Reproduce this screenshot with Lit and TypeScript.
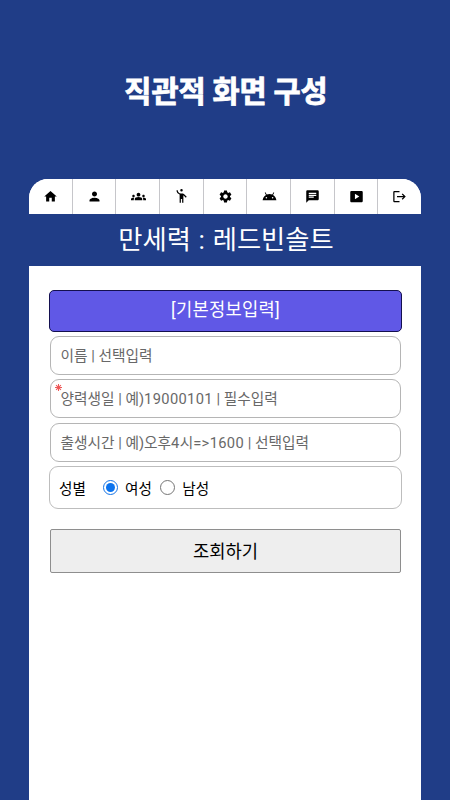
import { LitElement, html, css, svg } from "lit";
import { customElement } from "lit/decorators.js";

const icons: { name: string; d: string }[] = [
  { name: "홈", d: "M10 20v-6h4v6h5v-8h3L12 3 2 12h3v8z" },
  { name: "내 정보", d: "M12 12c2.21 0 4-1.79 4-4s-1.79-4-4-4-4 1.79-4 4 1.79 4 4 4zm0 2c-2.67 0-8 1.34-8 4v2h16v-2c0-2.66-5.33-4-8-4z" },
  { name: "그룹", d: "M12 12.75c1.63 0 3.07.39 4.24.9 1.08.48 1.76 1.56 1.76 2.73V18H6v-1.61c0-1.18.68-2.26 1.76-2.73 1.17-.52 2.61-.91 4.24-.91zM4 13c1.1 0 2-.9 2-2s-.9-2-2-2-2 .9-2 2 .9 2 2 2zm1.13 1.1c-.37-.06-.74-.1-1.13-.1-.99 0-1.93.21-2.78.58C.48 14.9 0 15.62 0 16.43V18h4.5v-1.61c0-.83.23-1.61.63-2.29zM20 13c1.1 0 2-.9 2-2s-.9-2-2-2-2 .9-2 2 .9 2 2 2zm4 3.43c0-.81-.48-1.53-1.22-1.85-.85-.37-1.79-.58-2.78-.58-.39 0-.76.04-1.13.1.4.68.63 1.46.63 2.29V18H24v-1.57zM12 6c1.66 0 3 1.34 3 3s-1.34 3-3 3-3-1.34-3-3 1.34-3 3-3z" },
  { name: "인사", d: "M12 0a2 2 0 1 0 0 4 2 2 0 0 0 0-4zM15.89 8.11C15.5 7.72 14.83 7 13.53 7h-2.54C8.24 6.99 6 4.75 6 2H4c0 3.16 2.11 5.84 5 6.71V22h2v-6h2v6h2V10.05L18.95 14l1.41-1.41-4.47-4.48z" },
  { name: "설정", d: "M19.14 12.94c.04-.3.06-.61.06-.94 0-.32-.02-.64-.07-.94l2.03-1.58c.18-.14.23-.41.12-.61l-1.92-3.32c-.12-.22-.37-.29-.59-.22l-2.39.96c-.5-.38-1.03-.7-1.62-.94l-.36-2.54c-.04-.24-.24-.41-.48-.41h-3.84c-.24 0-.43.17-.47.41l-.36 2.54c-.59.24-1.13.57-1.62.94l-2.39-.96c-.22-.08-.47 0-.59.22L2.74 8.87c-.12.21-.08.47.12.61l2.03 1.58c-.05.3-.09.63-.09.94s.02.64.07.94l-2.03 1.58c-.18.14-.23.41-.12.61l1.92 3.32c.12.22.37.29.59.22l2.39-.96c.5.38 1.03.7 1.62.94l.36 2.54c.05.24.24.41.48.41h3.84c.24 0 .44-.17.47-.41l.36-2.54c.59-.24 1.13-.56 1.62-.94l2.39.96c.22.08.47 0 .59-.22l1.92-3.32c.12-.22.07-.47-.12-.61l-2.01-1.58zM12 15.6c-1.98 0-3.6-1.62-3.6-3.6s1.62-3.6 3.6-3.6 3.6 1.62 3.6 3.6-1.62 3.6-3.6 3.6z" },
  { name: "안드로이드", d: "M17.6 9.48l1.84-3.18c.16-.31.04-.69-.26-.85-.29-.15-.65-.06-.83.22l-1.88 3.24c-2.86-1.21-6.08-1.21-8.94 0L5.65 5.67c-.19-.29-.58-.38-.87-.2-.28.18-.37.54-.22.83L6.4 9.48C3.3 11.25 1.28 14.44 1 18h22c-.28-3.56-2.3-6.75-5.4-8.52zM7 15.25c-.69 0-1.25-.56-1.25-1.25S6.31 12.75 7 12.75 8.25 13.31 8.25 14 7.69 15.25 7 15.25zm10 0c-.69 0-1.25-.56-1.25-1.25s.56-1.25 1.25-1.25 1.25.56 1.25 1.25-.56 1.25-1.25 1.25z" },
  { name: "채팅", d: "M20 2H4c-1.1 0-1.99.9-1.99 2L2 22l4-4h14c1.1 0 2-.9 2-2V4c0-1.1-.9-2-2-2zM6 9h12v2H6V9zm8 5H6v-2h8v2zm4-6H6V6h12v2z" },
  { name: "영상", d: "M20 3H4c-1.1 0-2 .9-2 2v14c0 1.1.9 2 2 2h16c1.1 0 2-.9 2-2V5c0-1.1-.9-2-2-2zM9.5 16.5v-9l7 4.5-7 4.5z" },
  { name: "나가기", d: "M17 7l-1.41 1.41L18.17 11H8v2h10.17l-2.58 2.58L17 17l5-5zM4 5h8V3H4c-1.1 0-2 .9-2 2v14c0 1.1.9 2 2 2h8v-2H4V5z" },
];

@customElement("app-root")
export class AppRoot extends LitElement {
  static styles = css`
    :host {
      display: block;
      height: 800px;
      overflow: hidden;
      background: #203d87;
      font-family: Roboto, "Noto Sans CJK KR", sans-serif;
    }
    * { box-sizing: border-box; }
    .headline {
      margin: 0;
      height: 179px;
      padding: 67px 0 0 2px;
      text-align: center;
      color: #fff;
      font-family: "Noto Sans CJK KR", sans-serif;
      font-size: 29.5px;
      line-height: 44px;
      font-weight: 700;
      white-space: nowrap;
      -webkit-text-stroke: 0.8px #fff;
    }
    .phone {
      width: 392px;
      height: 621px;
      margin-left: 29px;
      border-radius: 19px 19px 0 0;
      overflow: hidden;
      background: #fff;
    }
    .tabs { display: flex; height: 35px; background: #fff; }
    .tab {
      flex: 1;
      display: flex;
      align-items: center;
      justify-content: center;
      border-right: 1.5px solid #c6c6ca;
      padding-left: 1px;
    }
    .tab:last-child { border-right: 0; padding: 0 1px 0 0; }
    .tab svg { display: block; width: 15px; height: 15px; fill: #000; }
    .title {
      margin: 0;
      height: 52px;
      background: #203d87;
      color: #fff;
      font-size: 26.3px;
      font-weight: 400;
      line-height: 53px;
      text-align: center;
      word-spacing: 1.2px;
      padding-left: 2px;
      white-space: nowrap;
    }
    .form {
      display: flex;
      flex-direction: column;
      padding: 24px 20px 0 21px;
    }
    .section {
      height: 42px;
      margin: 0 -1px 4px;
      border: 1px solid #14104f;
      border-radius: 5px;
      background: #6058e6;
      color: #fff;
      font-size: 17.7px;
      letter-spacing: 0.25px;
      line-height: 39px;
      text-align: center;
    }
    .field {
      position: relative;
      height: 39px;
      margin-bottom: 4.4px;
      padding-left: 9.5px;
      border: 1px solid #b5b5b5;
      border-radius: 9px;
      color: #686868;
      font-size: 14.7px;
      line-height: 38px;
      white-space: nowrap;
    }
    .required {
      position: absolute;
      left: 4px;
      top: 4px;
      width: 7px;
      height: 7px;
      stroke: #ee5757;
      stroke-width: 1.2;
      fill: none;
    }
    .num { letter-spacing: 0.35px; }
    .gender {
      display: flex;
      align-items: center;
      height: 43px;
      margin: 0 -1px 20px;
      padding: 3px 0 0 9px;
      border: 1px solid #bdbdbd;
      border-radius: 9px;
      color: #000;
      font-size: 14.6px;
      line-height: 40px;
    }
    .legend { width: 44px; }
    .choice { display: flex; align-items: center; gap: 7px; margin-right: 8.5px; }
    .radio {
      width: 15px;
      height: 15px;
      border: 1px solid #757575;
      border-radius: 50%;
      padding: 2px;
      margin-top: -4px;
    }
    .radio.on { border-color: #1473e6; }
    .radio.on::before {
      content: "";
      display: block;
      width: 9px;
      height: 9px;
      border-radius: 50%;
      background: #0b73ee;
    }
    .submit {
      height: 44px;
      padding: 0 0 2px;
      border: 1px solid #8e8e8e;
      border-radius: 2px;
      background: #eee;
      color: #000;
      font: 400 17.7px/40px "Noto Sans CJK KR", sans-serif;
    }
  `;

  render() {
    return html`
      <h1 class="headline">직관적 화면 구성</h1>
      <main class="phone">
        <nav class="tabs">
          ${icons.map((i) => html`<div class="tab" aria-label=${i.name}>
            <svg viewBox="0 0 24 24">${svg`<path d=${i.d}></path>`}</svg>
          </div>`)}
        </nav>
        <h2 class="title">만세력 : 레드빈솔트</h2>
        <section class="form">
          <div class="section">[기본정보입력]</div>
          <div class="field">이름 | 선택입력</div>
          <div class="field">
            <svg class="required" viewBox="0 0 8 8"><path d="M4 0v8M0 4h8M1.2 1.2l5.6 5.6M6.8 1.2L1.2 6.8"></path></svg>양력생일 | 예)<span class="num">19000101</span> | 필수입력</div>
          <div class="field">출생시간 | 예)오후<span class="num">4</span>시<span class="num">=&gt;1600</span> | 선택입력</div>
          <div class="gender">
            <span class="legend">성별</span>
            <span class="choice"><span class="radio on"></span>여성</span>
            <span class="choice"><span class="radio"></span>남성</span>
          </div>
          <button class="submit">조회하기</button>
        </section>
      </main>
    `;
  }
}
